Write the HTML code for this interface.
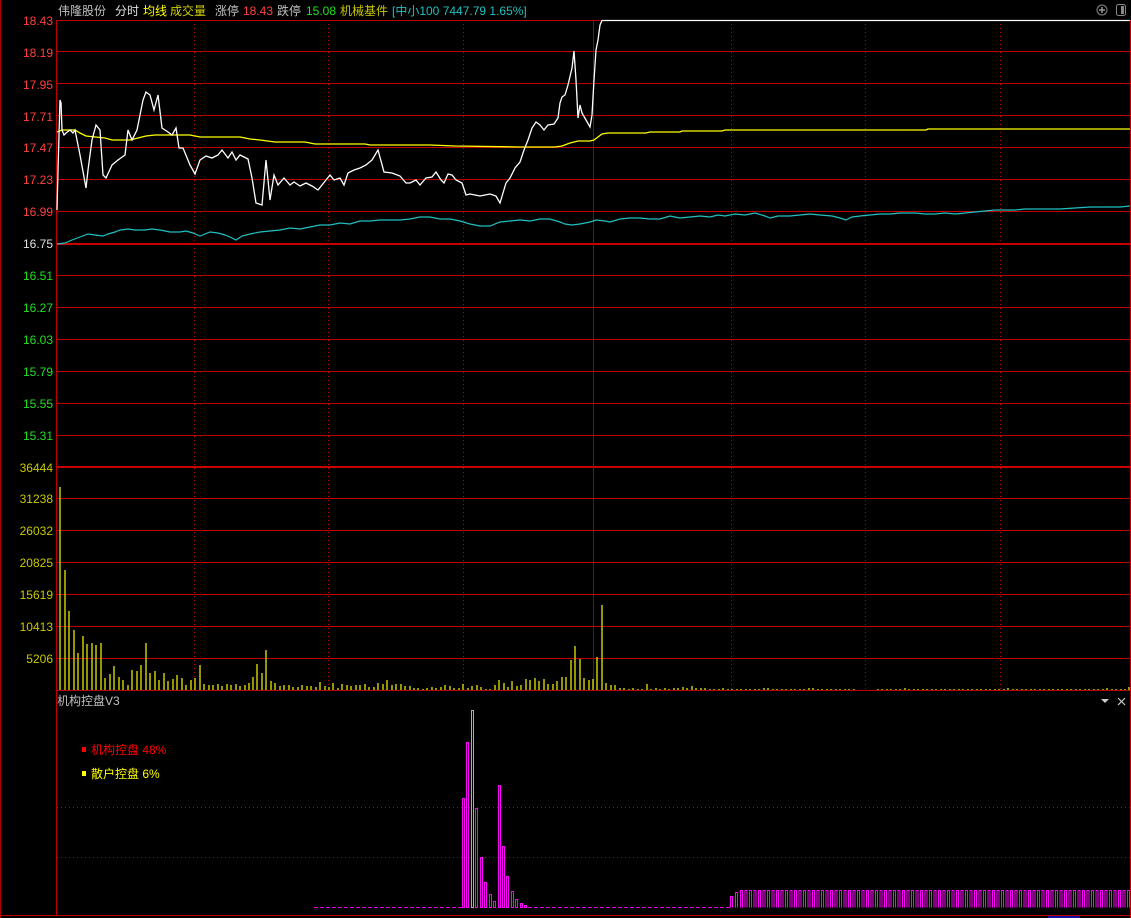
<!DOCTYPE html>
<html><head><meta charset="utf-8"><style>
html,body{margin:0;padding:0;background:#000;width:1131px;height:918px;overflow:hidden}
svg{display:block}
text{font-family:"Liberation Sans","Noto Sans CJK SC",sans-serif;font-size:12px}
</style></head><body>
<svg width="1131" height="918" viewBox="0 0 1131 918" xmlns="http://www.w3.org/2000/svg">
<rect width="1131" height="918" fill="#000"/>
<line x1="0.5" y1="0" x2="0.5" y2="918" stroke="#b00000"/>
<line x1="56.5" y1="20" x2="56.5" y2="915" stroke="#c00000"/>
<line x1="1130.5" y1="20" x2="1130.5" y2="918" stroke="#c00000"/>
<line x1="0" y1="915.5" x2="1131" y2="915.5" stroke="#c00000"/>
<rect x="1048" y="916" width="32" height="2" fill="#1010a0"/>
<g stroke="#c00000" stroke-width="1">
<line x1="56" y1="20.5" x2="1131" y2="20.5"/>
<line x1="56" y1="51.5" x2="1131" y2="51.5"/>
<line x1="56" y1="83.5" x2="1131" y2="83.5"/>
<line x1="56" y1="115.5" x2="1131" y2="115.5"/>
<line x1="56" y1="147.5" x2="1131" y2="147.5"/>
<line x1="56" y1="179.5" x2="1131" y2="179.5"/>
<line x1="56" y1="211.5" x2="1131" y2="211.5"/>
<line x1="56" y1="275.5" x2="1131" y2="275.5"/>
<line x1="56" y1="307.5" x2="1131" y2="307.5"/>
<line x1="56" y1="339.5" x2="1131" y2="339.5"/>
<line x1="56" y1="371.5" x2="1131" y2="371.5"/>
<line x1="56" y1="403.5" x2="1131" y2="403.5"/>
<line x1="56" y1="435.5" x2="1131" y2="435.5"/>
<line x1="56" y1="498.5" x2="1131" y2="498.5"/>
<line x1="56" y1="530.5" x2="1131" y2="530.5"/>
<line x1="56" y1="562.5" x2="1131" y2="562.5"/>
<line x1="56" y1="594.5" x2="1131" y2="594.5"/>
<line x1="56" y1="626.5" x2="1131" y2="626.5"/>
<line x1="56" y1="658.5" x2="1131" y2="658.5"/>
<line x1="56" y1="690.5" x2="1131" y2="690.5"/>
</g>
<g stroke="#c80000" stroke-width="2">
<line x1="56" y1="244" x2="1131" y2="244"/>
<line x1="56" y1="467" x2="1131" y2="467"/>
</g>
<g stroke="#c00000" stroke-width="1" stroke-dasharray="1,3">
<line x1="194.5" y1="20" x2="194.5" y2="690"/>
<line x1="328.5" y1="20" x2="328.5" y2="690"/>
<line x1="463.5" y1="20" x2="463.5" y2="690"/>
<line x1="731.5" y1="20" x2="731.5" y2="690"/>
<line x1="865.5" y1="20" x2="865.5" y2="690"/>
<line x1="1000.5" y1="20" x2="1000.5" y2="690"/>
<line x1="57" y1="807.5" x2="1131" y2="807.5"/>
<line x1="57" y1="857.5" x2="1131" y2="857.5"/>
</g>
<line x1="593.5" y1="20" x2="593.5" y2="690" stroke="#a00000"/>
<text x="58" y="15" fill="#c0c0c0">伟隆股份</text>
<text x="115" y="15" fill="#e0e0e0">分时</text>
<text x="143" y="15" fill="#ffff00">均线</text>
<text x="170" y="15" fill="#d0d000">成交量</text>
<text x="215" y="15" fill="#c0c0c0">涨停</text>
<text x="243" y="15" fill="#ff4040">18.43</text>
<text x="277" y="15" fill="#c0c0c0">跌停</text>
<text x="306" y="15" fill="#20e020">15.08</text>
<text x="340" y="15" fill="#c8c800">机械基件</text>
<text x="392" y="15" fill="#20c0c0">[中小100 7447.79 1.65%]</text>
<g fill="none" stroke="#888" stroke-width="1">
<circle cx="1102" cy="10" r="5"/>
<rect x="1116.5" y="4.5" width="9" height="11" rx="2"/>
</g>
<path d="M1102 7v6M1099 10h6" stroke="#999" stroke-width="1.5"/>
<rect x="1121" y="6" width="3" height="8" fill="#888"/>
<g text-anchor="end">
<text x="53" y="25" fill="#ff4040">18.43</text>
<text x="53" y="57" fill="#ff4040">18.19</text>
<text x="53" y="89" fill="#ff4040">17.95</text>
<text x="53" y="121" fill="#ff4040">17.71</text>
<text x="53" y="152" fill="#ff4040">17.47</text>
<text x="53" y="184" fill="#ff4040">17.23</text>
<text x="53" y="216" fill="#ff4040">16.99</text>
<text x="53" y="248" fill="#e0e0e0">16.75</text>
<text x="53" y="280" fill="#20e020">16.51</text>
<text x="53" y="312" fill="#20e020">16.27</text>
<text x="53" y="344" fill="#20e020">16.03</text>
<text x="53" y="376" fill="#20e020">15.79</text>
<text x="53" y="408" fill="#20e020">15.55</text>
<text x="53" y="440" fill="#20e020">15.31</text>
<text x="53" y="472" fill="#c8c800">36444</text>
<text x="53" y="503" fill="#c8c800">31238</text>
<text x="53" y="535" fill="#c8c800">26032</text>
<text x="53" y="567" fill="#c8c800">20825</text>
<text x="53" y="599" fill="#c8c800">15619</text>
<text x="53" y="631" fill="#c8c800">10413</text>
<text x="53" y="663" fill="#c8c800">5206</text>
</g>
<polyline fill="none" stroke="#20c0c0" stroke-width="1.2" points="57,244 65,243 72,240 80,237 88,234 95,235 103,236 108,234 115,232 120,230 128,229 135,230 145,230 152,229 160,230 170,232 180,232 186,231 193,233 200,236 205,234 210,232 218,233 225,235 230,237 236,240 242,236 250,234 260,232 270,231 280,230 290,228 300,229 310,227 320,225 330,225 340,223 350,224 360,221 370,221 380,220 390,220 400,220 410,219 420,217 430,217 440,219 450,219 460,221 470,224 480,226 490,226 500,222 510,221 520,220 530,221 540,219 550,219 560,222 565,224 572,225 580,224 590,222 596,220 605,221 610,222 620,219 630,218 640,218 650,219 660,219 670,216 680,218 690,217 700,216 710,217 718,215 725,216 735,214 745,215 755,213 765,216 770,218 778,216 790,216 800,215 810,214 820,215 832,216 840,218 846,220 852,217 860,216 870,215 880,214 890,214 900,213 915,213 925,214 935,214 945,213 955,214 965,213 975,212 985,211 995,210 1005,210 1015,210 1025,209 1035,209 1045,209 1060,209 1075,208 1090,207 1100,207 1110,207 1120,207 1130,206"/>
<polyline fill="none" stroke="#ffff00" stroke-width="1.3" points="57,132 62,130 68,130 75,130 80,133 86,136 105,138 112,140 130,140 138,138 146,136 155,135 190,135 200,137 240,137 250,139 260,140 275,142 305,142 315,144 365,144 370,145 430,145 455,146 520,147 555,147 562,146 570,143 578,141 590,141 594,140 598,137 602,134 608,133 646,133 650,132 680,132 682,131 722,131 725,130 926,130 928,129 1130,129"/>
<polyline fill="none" stroke="#ffffff" stroke-width="1.3" points="57,210 58,170 60,100 61,103 62,130 64,135 66,133 70,130 73,133 75,130 80,155 86,188 88,170 92,140 96,125 100,130 103,175 106,178 112,165 118,160 125,155 128,130 132,140 137,130 143,100 146,92 150,95 154,110 158,95 162,128 168,132 172,135 176,128 179,148 183,148 190,165 195,174 200,160 206,156 212,158 218,155 222,150 228,158 232,152 236,160 240,155 248,159 252,178 256,203 262,205 266,160 270,200 274,175 278,185 284,178 290,185 294,182 300,186 306,183 312,186 318,190 322,185 330,175 334,180 340,178 344,185 348,173 354,170 360,168 366,165 372,160 378,150 384,172 392,173 400,176 406,183 410,183 416,180 420,185 426,178 432,177 436,172 441,180 444,183 448,174 452,175 456,180 462,183 466,195 470,194 480,196 490,194 496,196 500,203 506,183 510,178 515,168 520,162 524,150 528,140 532,128 536,122 540,125 544,130 548,125 554,124 558,118 560,103 562,97 565,95 568,85 572,68 574,51 576,80 578,118 580,105 582,113 586,120 590,127 592,115 594,80 596,50 598,40 600,25 602,20.5 1130,20.5"/>
<path stroke="#c8c800" stroke-width="1.5" fill="none" d="
M60 690v-203M65 690v-120M69 690v-79M74 690v-60M78 690v-37M83 690v-54M87 690v-46M92 690v-47M96 690v-45M101 690v-47M105 690v-12M110 690v-16M114 690v-24M119 690v-13M123 690v-10M128 690v-5M132 690v-20M137 690v-19M141 690v-25M146 690v-47M150 690v-17M155 690v-19M159 690v-10M164 690v-17M168 690v-9M173 690v-11M177 690v-15M182 690v-12M186 690v-5M191 690v-10M195 690v-12M200 690v-25M204 690v-6M209 690v-5M213 690v-5M218 690v-6M222 690v-4M227 690v-6M231 690v-5M236 690v-6M240 690v-4M245 690v-5M249 690v-7
M253 690v-13M257 690v-26M262 690v-17M266 690v-40M271 690v-9M275 690v-7M280 690v-4M284 690v-5M289 690v-5M293 690v-3M298 690v-3M302 690v-5M307 690v-4M311 690v-4M316 690v-3M320 690v-8M325 690v-4M329 690v-3M333 690v-7M338 690v-2M342 690v-6M347 690v-5M351 690v-4M356 690v-5M360 690v-5M365 690v-6M369 690v-3M374 690v-3M378 690v-7M383 690v-6M387 690v-10M392 690v-5M396 690v-6M401 690v-6M405 690v-4M410 690v-4M414 690v-2M418 690v-2M423 690v-1M427 690v-2M432 690v-3M436 690v-2M441 690v-3M445 690v-5M450 690v-4M454 690v-2M459 690v-2M463 690v-6M468 690v-2M472 690v-4M477 690v-5M481 690v-3M486 690v-1M490 690v-1M495 690v-5M499 690v-10M504 690v-7M508 690v-3M512 690v-9M517 690v-4M521 690v-5M526 690v-11M530 690v-10M535 690v-12M539 690v-9M544 690v-11M548 690v-6M553 690v-6M557 690v-9M562 690v-13M566 690v-13M571 690v-30M575 690v-44M580 690v-31M584 690v-12M589 690v-10M593 690v-11M597 690v-33M602 690v-85M606 690v-7M611 690v-5M615 690v-5M620 690v-2M624 690v-2M629 690v-1M633 690v-2M638 690v-1M642 690v-1M647 690v-6M651 690v-1M656 690v-2M660 690v-1M665 690v-2M669 690v-1M674 690v-2M678 690v-2M683 690v-3M687 690v-2M692 690v-4M696 690v-2M701 690v-2M705 690v-2M710 690v-1M714 690v-1M719 690v-1M723 690v-2M728 690v-1M732 690v-1M737 690v-1M741 690v-1M746 690v-1M750 690v-1M755 690v-1M759 690v-1M764 690v-2M768 690v-2M773 690v-1M777 690v-1M782 690v-1M786 690v-1M791 690v-1M795 690v-1M800 690v-1M804 690v-1M809 690v-2M813 690v-2M818 690v-1M822 690v-1M827 690v-1M831 690v-1M836 690v-1M840 690v-1M845 690v-1M849 690v-1M854 690v-1M878 690v-1M882 690v-1M887 690v-1M891 690v-1M896 690v-1M900 690v-1M905 690v-2M909 690v-1M914 690v-1M918 690v-1M923 690v-1M927 690v-1M932 690v-1M936 690v-1M941 690v-1M945 690v-1M950 690v-1M954 690v-1M959 690v-1M963 690v-1M968 690v-1M972 690v-1M977 690v-1M981 690v-1M986 690v-1M990 690v-1M995 690v-1M999 690v-1M1004 690v-1M1008 690v-2M1013 690v-1M1017 690v-1M1022 690v-1M1026 690v-1M1031 690v-1M1035 690v-1M1040 690v-1M1044 690v-1M1049 690v-1M1053 690v-1M1058 690v-1M1062 690v-1M1067 690v-1M1071 690v-1M1076 690v-1M1080 690v-1M1085 690v-1M1089 690v-1M1094 690v-1M1098 690v-1M1103 690v-1M1107 690v-2M1112 690v-1M1116 690v-1M1121 690v-1M1125 690v-1M1129 690v-3"/>
<text x="57" y="705" fill="#c0c0c0">机构控盘V3</text>
<path d="M1101 699h8l-4 4z" fill="#ccc"/>
<path d="M1118 698l7 7M1125 698l-7 7" stroke="#ccc" stroke-width="1.2"/>
<rect x="82" y="747" width="4" height="5" fill="#ff0000"/>
<text x="91" y="754" fill="#ff0000">机构控盘 48%</text>
<rect x="82" y="771" width="4" height="5" fill="#ffff00"/>
<text x="91" y="778" fill="#ffff00">散户控盘 6%</text>
<line x1="314" y1="907.5" x2="462" y2="907.5" stroke="#e000e0" stroke-dasharray="4,2"/>
<line x1="528" y1="907.5" x2="730" y2="907.5" stroke="#e000e0" stroke-dasharray="4,2"/>
<g fill="none" stroke="#ff00ff" stroke-width="1">
<rect x="462.5" y="798.5" width="2" height="109"/>
<rect x="466.5" y="742.5" width="2" height="165"/>
<rect x="471.5" y="710.5" width="2" height="197" stroke="#c0a0c0"/>
<rect x="475.5" y="808.5" width="2" height="99"/>
<rect x="480.5" y="857.5" width="2" height="50"/>
<rect x="484.5" y="882.5" width="2" height="25"/>
<rect x="489.5" y="894.5" width="2" height="13"/>
<rect x="493.5" y="901.5" width="2" height="6"/>
<rect x="498.5" y="785.5" width="2" height="122"/>
<rect x="502.5" y="846.5" width="2" height="61"/>
<rect x="506.5" y="876.5" width="2" height="31"/>
<rect x="511.5" y="891.5" width="2" height="16"/>
<rect x="515.5" y="899.5" width="2" height="8"/>
<rect x="520.5" y="903.5" width="2" height="4"/>
<rect x="524.5" y="905.5" width="2" height="2"/>
</g>
<path fill="none" stroke="#ff00ff" stroke-width="1" d="M730.5 907.5v-11h2v11M735.5 907.5v-15h2v15"/>
<path fill="none" stroke="#ff00ff" stroke-width="1" d="M740.5 907.5v-17h2v17M745 907.5v-17h2v17M749.5 907.5v-17h2v17M754 907.5v-17h2v17M758.5 907.5v-17h2v17M763 907.5v-17h2v17M767.5 907.5v-17h2v17M772 907.5v-17h2v17M776.5 907.5v-17h2v17M781 907.5v-17h2v17M785.5 907.5v-17h2v17M790 907.5v-17h2v17M794.5 907.5v-17h2v17M799 907.5v-17h2v17M803.5 907.5v-17h2v17M808 907.5v-17h2v17M812.5 907.5v-17h2v17M817 907.5v-17h2v17M821.5 907.5v-17h2v17M826 907.5v-17h2v17M830.5 907.5v-17h2v17M835 907.5v-17h2v17M839.5 907.5v-17h2v17M844 907.5v-17h2v17M848.5 907.5v-17h2v17M853 907.5v-17h2v17M857.5 907.5v-17h2v17M862 907.5v-17h2v17M866.5 907.5v-17h2v17M871 907.5v-17h2v17M875.5 907.5v-17h2v17M880 907.5v-17h2v17M884.5 907.5v-17h2v17M889 907.5v-17h2v17M893.5 907.5v-17h2v17M898 907.5v-17h2v17M902.5 907.5v-17h2v17M907 907.5v-17h2v17M911.5 907.5v-17h2v17M916 907.5v-17h2v17M920.5 907.5v-17h2v17M925 907.5v-17h2v17M929.5 907.5v-17h2v17M934 907.5v-17h2v17M938.5 907.5v-17h2v17M943 907.5v-17h2v17M947.5 907.5v-17h2v17M952 907.5v-17h2v17M956.5 907.5v-17h2v17M961 907.5v-17h2v17M965.5 907.5v-17h2v17M970 907.5v-17h2v17M974.5 907.5v-17h2v17M979 907.5v-17h2v17M983.5 907.5v-17h2v17M988 907.5v-17h2v17M992.5 907.5v-17h2v17M997 907.5v-17h2v17M1001.5 907.5v-17h2v17M1006 907.5v-17h2v17M1010.5 907.5v-17h2v17M1015 907.5v-17h2v17M1019.5 907.5v-17h2v17M1024 907.5v-17h2v17M1028.5 907.5v-17h2v17M1033 907.5v-17h2v17M1037.5 907.5v-17h2v17M1042 907.5v-17h2v17M1046.5 907.5v-17h2v17M1051 907.5v-17h2v17M1055.5 907.5v-17h2v17M1060 907.5v-17h2v17M1064.5 907.5v-17h2v17M1069 907.5v-17h2v17M1073.5 907.5v-17h2v17M1078 907.5v-17h2v17M1082.5 907.5v-17h2v17M1087 907.5v-17h2v17M1091.5 907.5v-17h2v17M1096 907.5v-17h2v17M1100.5 907.5v-17h2v17M1105 907.5v-17h2v17M1109.5 907.5v-17h2v17M1114 907.5v-17h2v17M1118.5 907.5v-17h2v17M1123 907.5v-17h2v17M1127.5 907.5v-17h2v17"/>
</svg>
</body></html>
